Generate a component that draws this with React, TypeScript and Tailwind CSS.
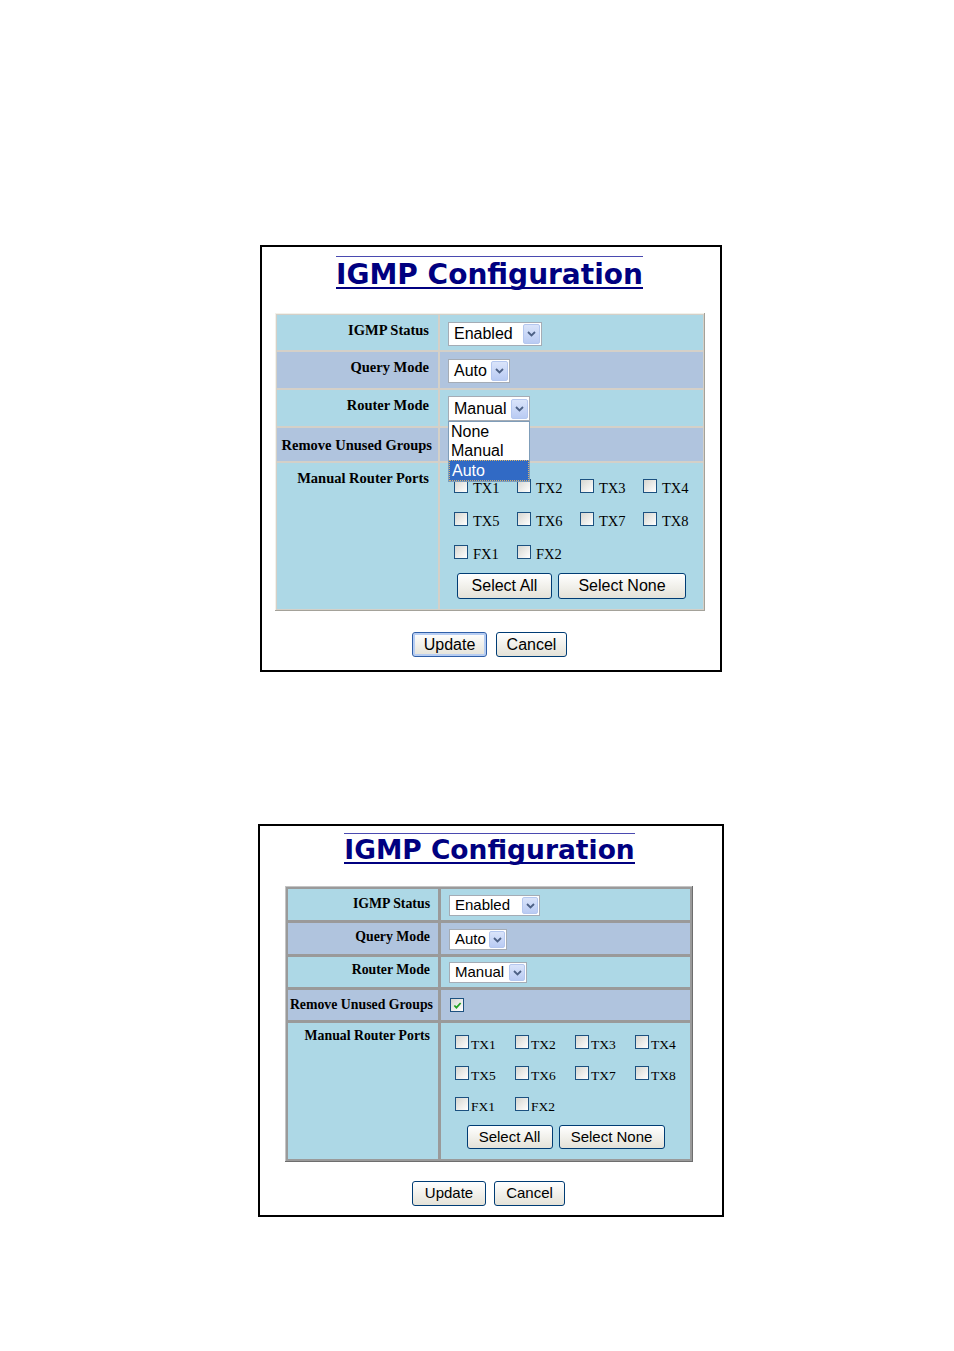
import React from 'react';

const ports = ['TX1', 'TX2', 'TX3', 'TX4', 'TX5', 'TX6', 'TX7', 'TX8', 'FX1', 'FX2'];

const Chevron: React.FC = () => (
  <svg viewBox="0 0 9 6" className="w-[9px] h-[6px]">
    <path d="M1 1l3.5 3.5L8 1" fill="none" stroke="#4d6185" strokeWidth="1.8" />
  </svg>
);

const Select: React.FC<{ value: string; box: string; text: string; arrow: string }> = ({ value, box, text, arrow }) => (
  <div className={`flex items-center justify-between bg-white border border-[#a5acb5] p-[1px] ${box}`}>
    <span className={`pl-[4px] text-black font-['Liberation_Sans',Arial,sans-serif] ${text}`}>{value}</span>
    <span
      className={`flex items-center justify-center rounded-[2px] border border-[#b4c7ef] bg-linear-to-b from-[#dae4fa] to-[#b9cbf3] ${arrow}`}
    >
      <Chevron />
    </span>
  </div>
);

const Box: React.FC<{ checked?: boolean }> = ({ checked }) => (
  <span className="flex items-center justify-center w-[14px] h-[14px] shrink-0 border border-[#1c5180] bg-linear-to-br from-[#d6d6d0] to-white">
    {checked && (
      <svg viewBox="0 0 10 10" className="w-[9px] h-[9px]">
        <path d="M1.5 5l2.3 2.4L8.5 2.2" fill="none" stroke="#21a121" strokeWidth="2" />
      </svg>
    )}
  </span>
);

const Button: React.FC<{ label: string; cls: string; active?: boolean }> = ({ label, cls, active }) => (
  <button
    className={`flex items-center justify-center rounded-[3px] border bg-linear-to-b from-white to-[#e4e2d8] text-black font-['Liberation_Sans',Arial,sans-serif] ${
      active ? 'border-[#2f5fa8] shadow-[inset_0_0_0_2px_#b7cdf2]' : 'border-[#003c74]'
    } ${cls}`}
  >
    {label}
  </button>
);

const Title: React.FC<{ cls: string }> = ({ cls }) => (
  <div className="flex justify-center">
    <span
      className={`border-t border-[#4a4ab0] border-b-2 border-b-[#000080] text-[#000080] font-bold font-['DejaVu_Sans',Verdana,sans-serif] ${cls}`}
    >
      IGMP Configuration
    </span>
  </div>
);

const label1 = "flex justify-end font-['Liberation_Serif',serif] font-bold text-[14.5px] leading-[17px] text-black";
const label2 = "flex justify-end font-['Liberation_Serif',serif] font-bold text-[13.8px] leading-[16px] text-black";

const FirstPanel: React.FC = () => (
  <div className="ml-[260px] w-[462px] h-[427px] border-2 border-black bg-white">
    <div className="mt-[9px] pr-[3px]">
      <Title cls="text-[28px] leading-[25px] pt-[5px]" />
    </div>
    <div className="mt-[24px] ml-[13px] w-[430px] grid grid-cols-[161px_263px] grid-rows-[35px_36px_36px_33px_146px] gap-[2px] p-[2px] bg-[#d4d0c8] shadow-[inset_-1px_-1px_0_#a4a29a,inset_1px_1px_0_#f2f1ea]">
      <div className={`${label1} bg-[#add8e6] pt-[7px] pr-[9px]`}>IGMP Status</div>
      <div className="bg-[#add8e6] pt-[7px] pl-[8px]">
        <Select value="Enabled" box="w-[94px] h-[24px]" text="text-[16px]" arrow="w-[17px] h-[20px]" />
      </div>
      <div className={`${label1} bg-[#b0c4de] pt-[7px] pr-[9px]`}>Query Mode</div>
      <div className="bg-[#b0c4de] pt-[7px] pl-[8px]">
        <Select value="Auto" box="w-[62px] h-[24px]" text="text-[16px]" arrow="w-[17px] h-[20px]" />
      </div>
      <div className={`${label1} bg-[#add8e6] pt-[7px] pr-[9px]`}>Router Mode</div>
      <div className="bg-[#add8e6] pt-[6px] pl-[8px] relative z-10">
        <div className="relative w-[82px]">
          <Select value="Manual" box="w-[82px] h-[25px]" text="text-[16px]" arrow="w-[17px] h-[20px]" />
          <div className="absolute left-0 top-full w-[82px] bg-white border border-[#7f9db9] font-['Liberation_Sans',Arial,sans-serif] text-[16px] leading-[19px] text-black">
            <div className="pl-[2px]">None</div>
            <div className="pl-[2px]">Manual</div>
            <div className="pl-[2px] bg-[#316ac5] text-white border border-dotted border-[#d9b36a]">Auto</div>
          </div>
        </div>
      </div>
      <div className={`${label1} bg-[#b0c4de] pt-[9px] pr-[6px]`}>Remove Unused Groups</div>
      <div className="bg-[#b0c4de] pt-[9px] pl-[9px]">
        <Box checked />
      </div>
      <div className={`${label1} bg-[#add8e6] pt-[7px] pr-[9px]`}>Manual Router Ports</div>
      <div className="bg-[#add8e6] pt-[16px]">
        <div className="grid grid-cols-[63px_63px_63px_63px] gap-y-[19px] pl-[14px]">
          {ports.map((p) => (
            <div key={p} className="flex items-end gap-[5px]">
              <Box />
              <span className="font-['Liberation_Serif',serif] text-[14.5px] leading-[10px] text-black">{p}</span>
            </div>
          ))}
        </div>
        <div className="mt-[14px] flex justify-center gap-[6px]">
          <Button label="Select All" cls="w-[95px] h-[26px] text-[16px]" />
          <Button label="Select None" cls="w-[128px] h-[26px] text-[16px]" />
        </div>
      </div>
    </div>
    <div className="mt-[21px] flex justify-center gap-[9px] pr-[3px]">
      <Button label="Update" cls="w-[75px] h-[25px] text-[16px]" active />
      <Button label="Cancel" cls="w-[71px] h-[25px] text-[16px]" />
    </div>
  </div>
);

const SecondPanel: React.FC = () => (
  <div className="mt-[152px] ml-[258px] w-[466px] h-[393px] border-2 border-black bg-white">
    <div className="mt-[7px] pr-[3px]">
      <Title cls="text-[26.5px] leading-[24px] pt-[4px]" />
    </div>
    <div className="mt-[22px] ml-[25px] w-[408px] grid grid-cols-[150px_249px] grid-rows-[31px_31px_30px_30px_136px] gap-[3px] p-[3px] bg-[#9a9a9a] shadow-[inset_-1px_-1px_0_#6e6e6e,inset_1px_1px_0_#c4c4c4]">
      <div className={`${label2} bg-[#add8e6] pt-[7px] pr-[8px]`}>IGMP Status</div>
      <div className="bg-[#add8e6] pt-[6px] pl-[8px]">
        <Select value="Enabled" box="w-[91px] h-[21px]" text="text-[15px]" arrow="w-[16px] h-[17px]" />
      </div>
      <div className={`${label2} bg-[#b0c4de] pt-[6px] pr-[8px]`}>Query Mode</div>
      <div className="bg-[#b0c4de] pt-[6px] pl-[8px]">
        <Select value="Auto" box="w-[58px] h-[21px]" text="text-[15px]" arrow="w-[16px] h-[17px]" />
      </div>
      <div className={`${label2} bg-[#add8e6] pt-[5px] pr-[8px]`}>Router Mode</div>
      <div className="bg-[#add8e6] pt-[5px] pl-[8px]">
        <Select value="Manual" box="w-[78px] h-[21px]" text="text-[15px]" arrow="w-[16px] h-[17px]" />
      </div>
      <div className={`${label2} bg-[#b0c4de] pt-[7px] pr-[5px]`}>Remove Unused Groups</div>
      <div className="bg-[#b0c4de] pt-[8px] pl-[9px]">
        <Box checked />
      </div>
      <div className={`${label2} bg-[#add8e6] pt-[5px] pr-[8px]`}>Manual Router Ports</div>
      <div className="bg-[#add8e6] pt-[12px]">
        <div className="grid grid-cols-[60px_60px_60px_60px] gap-y-[17px] pl-[14px]">
          {ports.map((p) => (
            <div key={p} className="flex items-end gap-[2px]">
              <Box />
              <span className="font-['Liberation_Serif',serif] text-[13.5px] leading-[9px] text-black">{p}</span>
            </div>
          ))}
        </div>
        <div className="mt-[14px] flex justify-center gap-[6px]">
          <Button label="Select All" cls="w-[86px] h-[24px] text-[15px]" />
          <Button label="Select None" cls="w-[106px] h-[24px] text-[15px]" />
        </div>
      </div>
    </div>
    <div className="mt-[19px] flex justify-center gap-[8px] pr-[5px]">
      <Button label="Update" cls="w-[74px] h-[25px] text-[15px]" />
      <Button label="Cancel" cls="w-[71px] h-[25px] text-[15px]" />
    </div>
  </div>
);

export default function App() {
  return (
    <div className="w-[954px] min-h-[1351px] bg-white pt-[245px]">
      <FirstPanel />
      <SecondPanel />
    </div>
  );
}
